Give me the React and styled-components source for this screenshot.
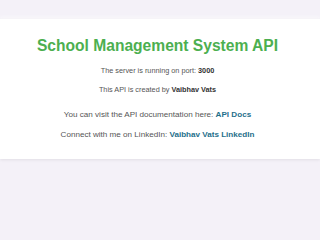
import React from "react";
import styled, { createGlobalStyle } from "styled-components";

const GlobalStyle = createGlobalStyle`
  html, body {
    margin: 0;
    padding: 0;
    background: #f4f1f8;
    font-family: "Liberation Sans", Arial, sans-serif;
  }
`;

const Page = styled.div`
  min-height: 240px;
  padding-top: 19px;
  box-sizing: border-box;
`;

const Card = styled.div`
  background: #ffffff;
  display: flex;
  flex-direction: column;
  align-items: center;
  padding: 18px 5px 19px 0;
  box-shadow: 0 1px 3px rgba(0, 0, 0, 0.08), 0 -2px 4px rgba(255, 255, 255, 0.6);
`;

const Title = styled.h1`
  margin: 0 0 11px;
  font-size: 15.6px;
  line-height: 18px;
  font-weight: bold;
  color: #4caf50;
`;

const Line = styled.p`
  margin: 0 0 ${({ $gap }) => $gap}px;
  font-size: ${({ $size }) => $size}px;
  line-height: 10px;
  color: #555;
`;

const Strong = styled.strong`
  color: #333;
`;

const Link = styled.a`
  color: #1f6f8b;
  font-weight: bold;
  text-decoration: none;
`;

const App = () => {
  return (
    <>
      <GlobalStyle />
      <Page>
        <Card>
          <Title>School Management System API</Title>
          <Line $size={7.3} $gap={9}>
            The server is running on port: <Strong>3000</Strong>
          </Line>
          <Line $size={7.3} $gap={15}>
            This API is created by <Strong>Vaibhav Vats</Strong>
          </Line>
          <Line $size={8.1} $gap={10}>
            You can visit the API documentation here: <Link href="#">API Docs</Link>
          </Line>
          <Line $size={8.1} $gap={0}>
            Connect with me on LinkedIn: <Link href="#">Vaibhav Vats LinkedIn</Link>
          </Line>
        </Card>
      </Page>
    </>
  );
};

export default App;
